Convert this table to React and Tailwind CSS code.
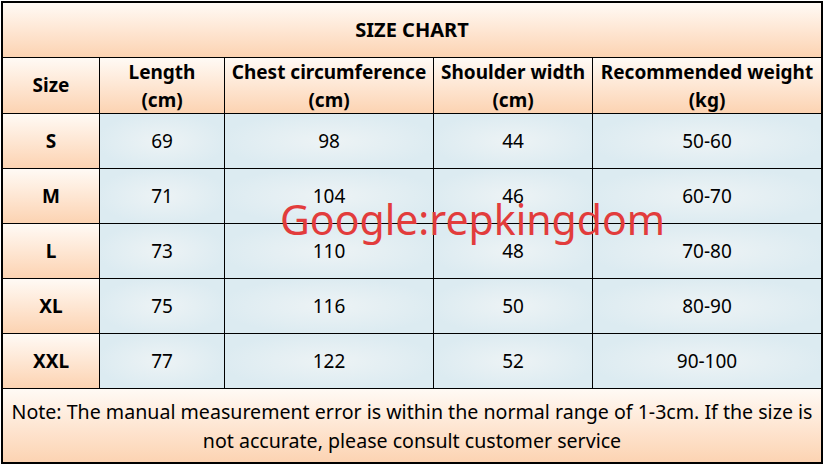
const rows = [
  ['S', '69', '98', '44', '50-60'],
  ['M', '71', '104', '46', '60-70'],
  ['L', '73', '110', '48', '70-80'],
  ['XL', '75', '116', '50', '80-90'],
  ['XXL', '77', '122', '52', '90-100'],
]

const peach = 'bg-gradient-to-b from-[#fffaf5] to-[#fcd3b2]'
const blue = 'bg-[radial-gradient(ellipse_at_center,#edf3f5_0%,#dcebf1_75%)]'

export default function App() {
  return (
    <div className="w-[824px] h-[465px] bg-white p-px font-['Noto_Sans',sans-serif] text-black">
      <div className="relative grid h-[463px] w-[822px] grid-cols-[96px_124px_208px_158px_1fr] grid-rows-[54px_55px_repeat(5,54px)_1fr] gap-px bg-black p-[2px]">
        <div className={`col-span-5 flex items-center justify-center text-[20px] font-bold ${peach}`}>
          SIZE CHART
        </div>

        <div className={`flex items-center justify-center text-[19px] font-bold ${peach}`}>Size</div>
        {['Length', 'Chest circumference', 'Shoulder width', 'Recommended weight'].map((h, i) => (
          <div key={h} className={`flex flex-col items-center justify-center text-[19px] font-bold leading-[28px] ${peach}`}>
            <span>{h}</span>
            <span>{i === 3 ? '(kg)' : '(cm)'}</span>
          </div>
        ))}

        {rows.map((r) => (
          <>
            <div key={r[0]} className={`flex items-center justify-center text-[19px] font-bold ${peach}`}>{r[0]}</div>
            {r.slice(1).map((v, j) => (
              <div key={r[0] + j} className={`flex items-center justify-center text-[19px] ${blue}`}>{v}</div>
            ))}
          </>
        ))}

        <div className={`col-span-5 flex items-center justify-center whitespace-nowrap text-center text-[19.6px] leading-[29px] ${peach}`}>
          <p>
            Note: The manual measurement error is within the normal range of 1-3cm. If the size is
            <br />
            not accurate, please consult customer service
          </p>
        </div>

        <div className="pointer-events-none absolute left-[279px] top-[198px] text-[41px] leading-none text-[#e23c3c]">
          Google:repkingdom
        </div>
      </div>
    </div>
  )
}
